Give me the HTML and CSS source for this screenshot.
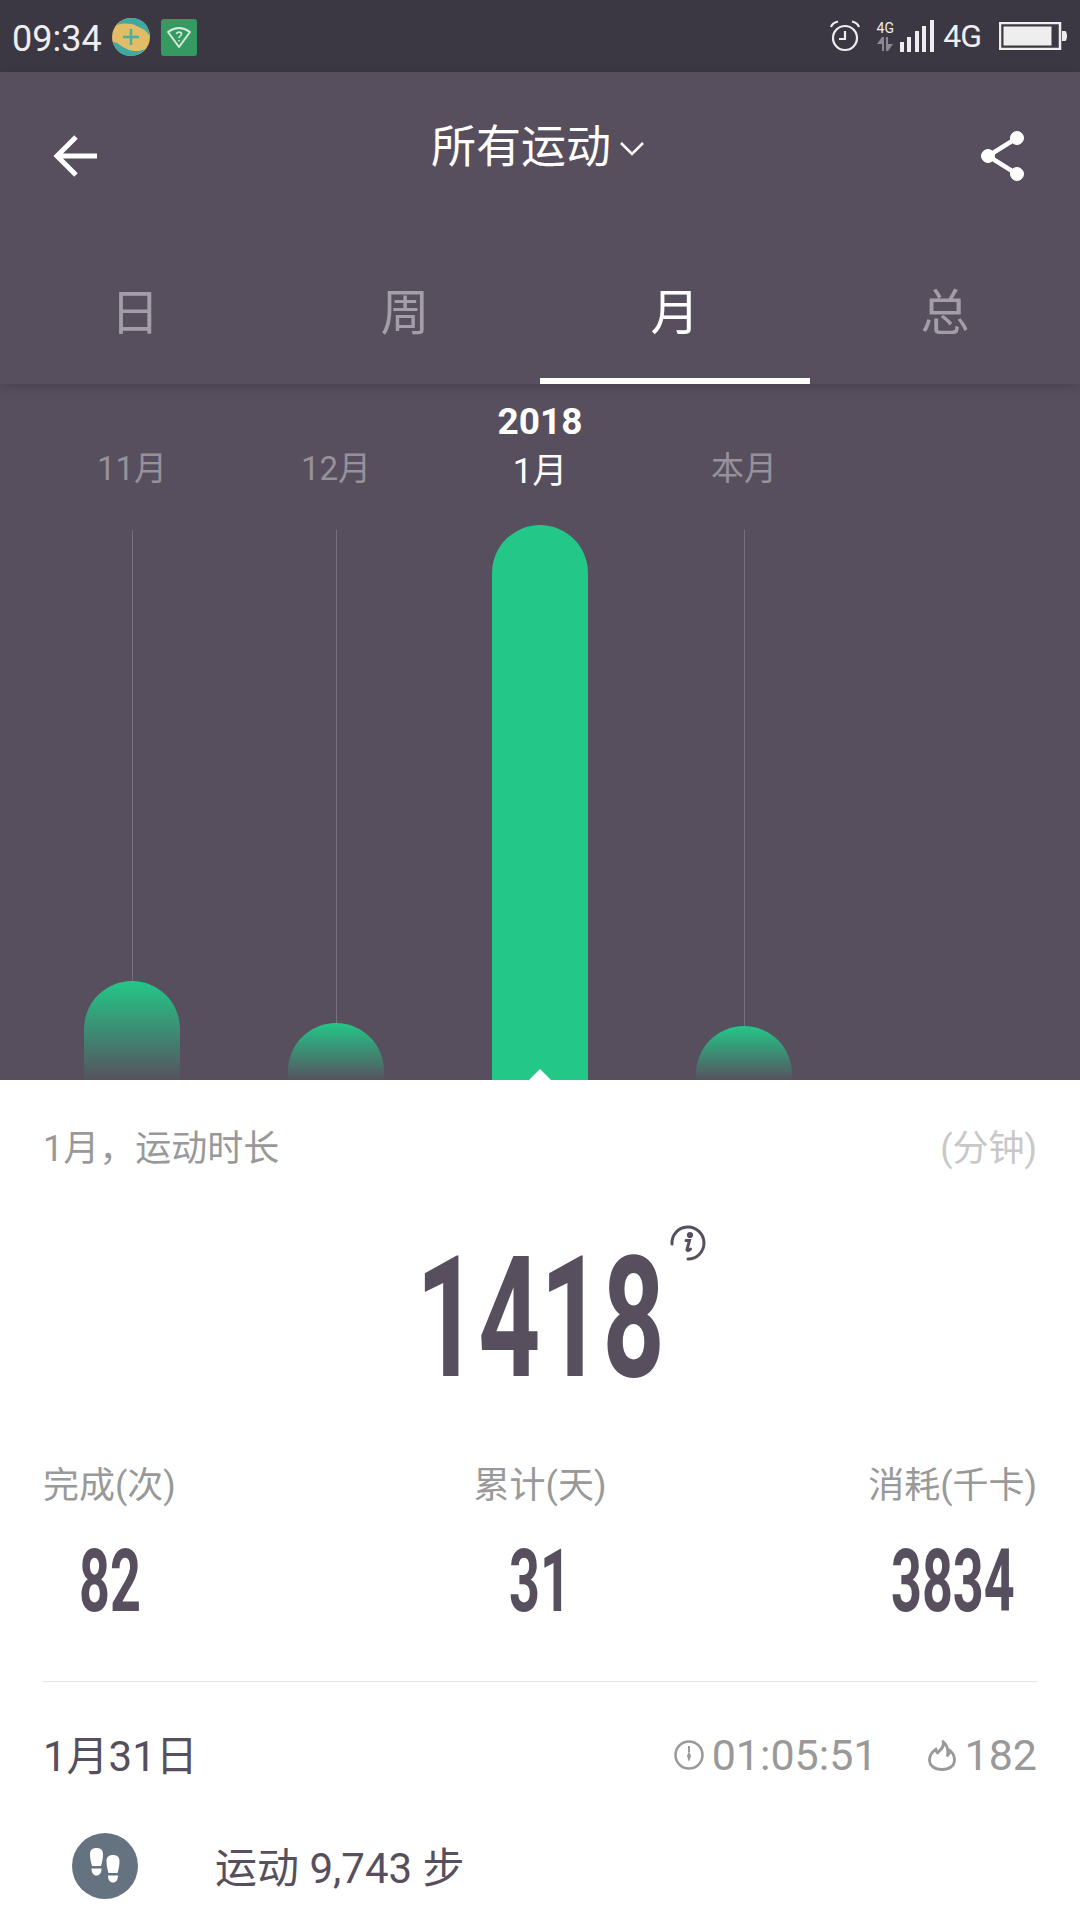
FILE: index.html
```html
<!DOCTYPE html>
<html lang="zh-CN">
<head>
    <meta charset="UTF-8">
    <meta name="viewport" content="width=device-width, initial-scale=1.0">
    <title>所有运动</title>
    <link rel="stylesheet" href="styles.css">
</head>
<body>
    <div class="status-bar">
        <div class="status-left">
            <span class="clock">09:34</span>
            <svg class="app-icon" width="38" height="38" viewBox="0 0 38 38">
                <circle cx="19" cy="19" r="19" fill="#e2bd68"/>
                <path d="M5 7C12 -2 28 -3 35 8C37 12 37 15 37 17C33 11 29 10 25 8C19 5 11 5 5 7Z" fill="#3fa8a0"/>
                <path d="M1 24C6 24 9 29 17 32C24 34 29 33 33 31C28 37 22 38 18 38C10 38 3 32 1 24Z" fill="#3fa8a0"/>
                <path d="M19 11V27M11 19H27" stroke="#4caea0" stroke-width="2.500"/>
            </svg>
            <svg class="app-icon" width="36" height="37" viewBox="0 0 36 37">
                <rect width="36" height="37" rx="3" fill="#359962"/>
                <path d="M7 13C14 8 22 8 29 13L18 28Z" fill="none" stroke="#d5eadc" stroke-width="2" stroke-linejoin="round"/>
                <path d="M15.500 15C16 12.500 20.500 12.500 20.500 15C20.500 17 18 17 18 19M18 21V22.500" fill="none" stroke="#d5eadc" stroke-width="1.600"/>
            </svg>
        </div>
        <div class="status-right">
            <svg width="32" height="32" viewBox="0 0 32 32" fill="none" stroke="#eee" stroke-width="2.200">
                <circle cx="16" cy="18" r="12"/>
                <path d="M16 11V19H10"/>
                <path d="M2 7C3 4 5 2.500 9 1.500M30 7C29 4 27 2.500 23 1.500"/>
            </svg>
            <div class="net-type">
                <span class="net-small">4G</span>
                <svg width="16" height="14" viewBox="0 0 16 14" fill="#8b8891">
                    <path d="M5 0V14H7V0ZM5 0L0 7H5ZM9 0V14H11V0ZM11 14L16 7H11Z"/>
                </svg>
            </div>
            <svg class="signal" width="34" height="32" viewBox="0 0 34 32" fill="#eee">
                <rect x="0" y="22" width="4" height="10"/>
                <rect x="7" y="17" width="4" height="15"/>
                <rect x="15" y="11" width="4" height="21"/>
                <rect x="22" y="6" width="4" height="26"/>
                <rect x="30" y="0" width="4" height="32"/>
            </svg>
            <span class="net-big">4G</span>
            <svg class="battery" width="68" height="28" viewBox="0 0 68 28">
                <rect x="1" y="1" width="60" height="26" fill="none" stroke="#eee" stroke-width="2.500"/>
                <rect x="4.500" y="4.500" width="48" height="19" fill="#eee"/>
                <path d="M63 9H66C67 9 68 11 68 14C68 17 67 19 66 19H63Z" fill="#eee"/>
            </svg>
        </div>
    </div>

    <div class="header">
        <div class="title-row">
            <svg width="44" height="44" viewBox="0 0 44 44" fill="none" stroke="#fff" stroke-width="5">
                <path d="M44 22H5M23 3L4 22L23 41"/>
            </svg>
            <div class="title">所有运动<svg class="chevron" width="24" height="15" viewBox="0 0 24 15" fill="none" stroke="#fff" stroke-width="2.500"><path d="M1 2L12 13L23 2"/></svg></div>
            <svg width="44" height="50" viewBox="0 0 44 50" fill="#fff" stroke="#fff">
                <circle cx="36" cy="7" r="6.500"/>
                <circle cx="7" cy="25" r="6.500"/>
                <circle cx="36" cy="43" r="6.500"/>
                <path d="M36 7L7 25L36 43" fill="none" stroke-width="4.500"/>
            </svg>
        </div>
        <div class="tabs">
            <div class="tab">日</div>
            <div class="tab">周</div>
            <div class="tab active">月</div>
            <div class="tab">总</div>
        </div>
    </div>

    <div class="chart">
        <div class="chart-col">
            <div class="col-label"><span class="month">11月</span></div>
            <div class="track"><div class="bar" style="height:99px"></div></div>
        </div>
        <div class="chart-col">
            <div class="col-label"><span class="month">12月</span></div>
            <div class="track"><div class="bar" style="height:57px"></div></div>
        </div>
        <div class="chart-col current">
            <div class="col-label"><span class="year">2018</span><span class="month">1月</span></div>
            <div class="track"><div class="bar" style="height:555px"></div></div>
        </div>
        <div class="chart-col">
            <div class="col-label"><span class="month">本月</span></div>
            <div class="track"><div class="bar" style="height:54px"></div></div>
        </div>
    </div>

    <div class="detail">
        <div class="detail-head">
            <span>1月，运动时长</span>
            <span class="unit">(分钟)</span>
        </div>
        <div class="total">
            <div class="big-wrap">
                <span class="big-number">1418</span>
                <svg class="info" width="36" height="36" viewBox="0 0 36 36" fill="none" stroke="#574f5d" stroke-width="3" stroke-linecap="round">
                    <path d="M2 19A16 16 0 1 1 18 34"/>
                    <path d="M16 15.500H19.500L17 24.500C16.800 26 18.500 26 20.500 24"/>
                    <circle cx="20" cy="10" r="1.600" fill="#574f5d"/>
                </svg>
            </div>
        </div>
        <div class="stats">
            <div class="stat">
                <div class="stat-label">完成(次)</div>
                <div class="stat-value">82</div>
            </div>
            <div class="stat middle">
                <div class="stat-label">累计(天)</div>
                <div class="stat-value">31</div>
            </div>
            <div class="stat last">
                <div class="stat-label">消耗(千卡)</div>
                <div class="stat-value">3834</div>
            </div>
        </div>
        <div class="day-row">
            <span class="day">1月31日</span>
            <div class="day-info">
                <svg width="30" height="30" viewBox="0 0 30 30" fill="none" stroke="#999" stroke-width="2.500">
                    <circle cx="15" cy="15" r="13.500"/>
                    <path d="M15 6V12" stroke-width="2"/>
                    <path d="M15 11L17 16L15 22L13 16Z" fill="#999" stroke="none"/>
                </svg>
                <span class="duration">01:05:51</span>
                <svg class="flame" width="28" height="31" viewBox="0 0 28 31" fill="none" stroke="#999" stroke-width="2.800" stroke-linejoin="round">
                    <path d="M15 1.500C17 7 12 10 9.500 13C8 11.500 8 10 8 9C4 12 1.500 16 1.500 20C1.500 26 7 29.500 14 29.500C21 29.500 26.500 26 26.500 20C26.500 15.500 24 12 21.500 10C22 12.500 21 14.500 19.500 15.500C20.500 10 19 5 15 1.500Z"/>
                </svg>
                <span class="calories">182</span>
            </div>
        </div>
        <div class="activity">
            <svg class="steps" width="66" height="66" viewBox="0 0 66 66">
                <circle cx="33" cy="33" r="33" fill="#65727f"/>
                <g fill="#fff">
                    <path d="M18 21C18 17 20.500 15 24.500 15C28.500 15 31 17 31 21C31 26 30 29 29 33H20C19 29 18 26 18 21Z"/>
                    <path d="M19.500 35.500H29.500C29.500 40 27.500 42.500 24.500 42.500C21.500 42.500 19.500 40 19.500 35.500Z"/>
                    <path d="M34.500 28C34.500 24 37 22 41 22C45 22 47.500 24 47.500 28C47.500 33 46.500 36 45.500 40H36.500C35.500 36 34.500 33 34.500 28Z"/>
                    <path d="M36 42.500H46C46 47 44 49.500 41 49.500C38 49.500 36 47 36 42.500Z"/>
                </g>
            </svg>
            <span class="activity-text">运动 9,743 步</span>
        </div>
    </div>
</body>
</html>
```

FILE: styles.css
```css
* {
    box-sizing: border-box;
}
html, body {
    margin: 0;
    padding: 0;
}
body {
    width: 1080px;
    height: 1920px;
    overflow: hidden;
    background-color: #fff;
    font-family: Roboto, "Noto Sans CJK SC", sans-serif;
    display: flex;
    flex-direction: column;
}
svg {
    display: block;
    flex: none;
}

.status-bar {
    height: 72px;
    flex: none;
    background-color: #3c3843;
    color: #eee;
    display: flex;
    justify-content: space-between;
    align-items: center;
    padding: 2px 13px 0 12px;
}
.status-left, .status-right {
    display: flex;
    align-items: center;
}
.clock {
    font-size: 36px;
    margin: 3px 10px 0 0;
}
.app-icon {
    margin-right: 11px;
}
.status-right {
    margin-top: -2px;
}
.net-type {
    width: 18px;
    margin: 0 6px 0 15px;
    display: flex;
    flex-direction: column;
    align-items: center;
    gap: 1px;
}
.net-small {
    font-size: 14px;
    line-height: 15px;
}
.net-big {
    font-size: 32px;
    margin: 0 18px 0 9px;
    letter-spacing: -1px;
}

.header {
    height: 312px;
    flex: none;
    background-color: #574f5d;
    color: #fff;
    display: flex;
    flex-direction: column;
    position: relative;
    z-index: 1;
    box-shadow: 0 2px 10px rgba(40, 35, 45, 0.35);
}
.title-row {
    height: 132px;
    flex: none;
    padding: 36px 55px 0 53px;
    display: flex;
    justify-content: space-between;
    align-items: center;
}
.title {
    font-size: 45px;
    line-height: 60px;
    margin: -16px 0 0 -3px;
    display: flex;
    align-items: center;
}
.chevron {
    margin-left: 9px;
}
.tabs {
    flex: 1;
    display: flex;
}
.tab {
    flex: 1;
    font-size: 49px;
    color: #a29ea7;
    text-align: center;
    padding-top: 75px;
    line-height: 70px;
    border-bottom: 6px solid transparent;
}
.tab.active {
    color: #fff;
    border-bottom-color: #fff;
}

.chart {
    flex: 1;
    min-height: 0;
    background-color: #574f5d;
    padding: 0 0 0 30px;
    display: flex;
}
.chart-col {
    width: 204px;
    display: flex;
    flex-direction: column;
    align-items: center;
}
.col-label {
    height: 146px;
    flex: none;
    padding-bottom: 39px;
    display: flex;
    flex-direction: column;
    justify-content: flex-end;
    align-items: center;
    color: #96919b;
}
.month {
    font-size: 33px;
    line-height: 44px;
}
.year {
    font-size: 37px;
    font-weight: 700;
    line-height: 44px;
    margin-bottom: 4px;
    color: #fff;
}
.current .col-label {
    height: 141px;
    padding-bottom: 29px;
}
.current .month {
    color: #fff;
    font-size: 35px;
    line-height: 48px;
}
.track {
    flex: 1;
    width: 96px;
    display: flex;
    align-items: flex-end;
    background: linear-gradient(#76717c, #76717c) center / 1px 100% no-repeat;
}
.bar {
    width: 96px;
    border-radius: 48px 48px 0 0;
    background: linear-gradient(#23c787, #56525f);
}
.current .track {
    background: none;
}
.current .bar {
    background: #23c787;
    position: relative;
}
.current .bar::after {
    content: "";
    position: absolute;
    left: 37px;
    bottom: 0;
    border-left: 11px solid transparent;
    border-right: 11px solid transparent;
    border-bottom: 11px solid #fff;
}

.detail {
    height: 840px;
    flex: none;
    padding: 0 43px;
    color: #574f5d;
}
.detail-head {
    height: 112px;
    padding-top: 43px;
    display: flex;
    justify-content: space-between;
    font-size: 36px;
    line-height: 52px;
    color: #999;
}
.unit {
    color: #c8c8c8;
}
.total {
    height: 268px;
    display: flex;
    justify-content: center;
}
.big-wrap {
    position: relative;
    width: 236px;
    margin-left: -12px;
    margin-top: 67px;
    height: 120px;
}
.big-number {
    display: block;
    font-size: 168px;
    font-weight: 700;
    line-height: 120px;
    white-space: nowrap;
    transform: scaleX(0.645);
    transform-origin: left center;
}
.info {
    position: absolute;
    left: 254px;
    top: -34px;
}
.stats {
    display: grid;
    grid-template-columns: 1fr auto 1fr;
    height: 222px;
    border-bottom: 1px solid #e6e6e6;
}
.stat {
    display: flex;
    flex-direction: column;
    align-items: center;
    justify-self: start;
}
.stat.last {
    justify-self: end;
}
.stat-label {
    font-size: 36px;
    line-height: 52px;
    color: #999;
}
.stat-value {
    margin: 38px -60px 0;
    font-size: 87px;
    font-weight: 700;
    line-height: 62px;
    white-space: nowrap;
    transform: scaleX(0.62);
}
.day-row {
    height: 146px;
    display: flex;
    justify-content: space-between;
    align-items: center;
}
.day {
    font-size: 42px;
    margin-top: -6px;
}
.day-info {
    display: flex;
    align-items: center;
    font-size: 43px;
    color: #999;
}
.duration {
    margin-left: 8px;
}
.flame {
    margin-left: 50px;
    margin-right: 9px;
}
.activity {
    display: flex;
    align-items: center;
    padding-left: 29px;
    margin-top: 5px;
}
.activity-text {
    margin: -4px 0 0 77px;
    font-size: 42px;
}
```
